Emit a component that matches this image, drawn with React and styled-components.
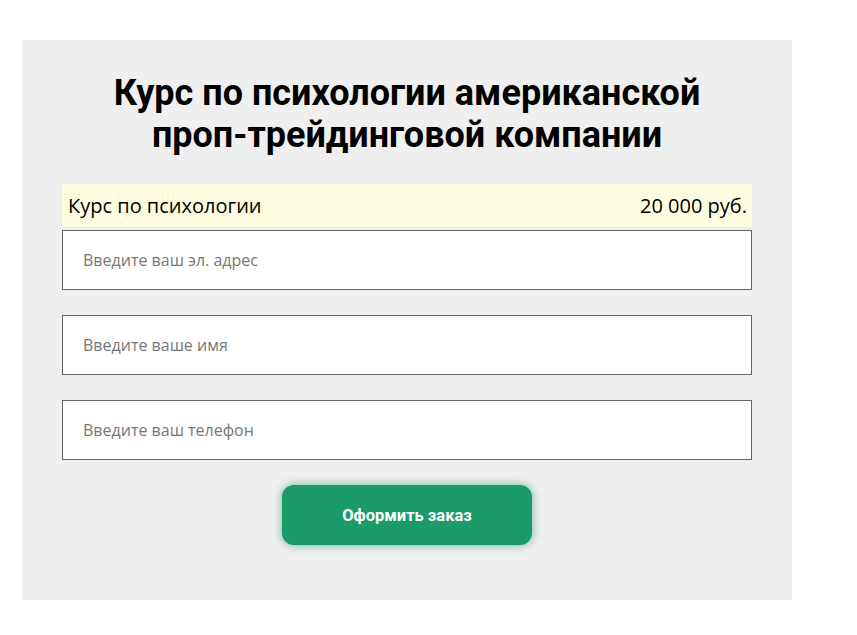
import React from 'react';
import styled, { createGlobalStyle } from 'styled-components';

const GlobalStyle = createGlobalStyle`
	body {
		margin: 0;
		background: #ffffff;
		font-family: 'Open Sans', 'Liberation Sans', sans-serif;
	}
`;

const Page = styled.div`
	padding: 40px 0 0 22px;
`;

const Panel = styled.div`
	width: 770px;
	height: 560px;
	box-sizing: border-box;
	background: #efefef;
	padding: 32px 40px 0;
	display: flex;
	flex-direction: column;
	align-items: stretch;
`;

const Title = styled.h1`
	margin: 0 0 28px;
	font-family: Roboto, 'Liberation Sans', sans-serif;
	font-weight: 700;
	font-size: 36px;
	line-height: 42px;
	color: #000;
	text-align: center;
`;

const PriceRow = styled.div`
	display: flex;
	justify-content: space-between;
	align-items: center;
	height: 43px;
	padding: 0 5px 0 6px;
	background: #fffde0;
	font-size: 20px;
	color: #000;
	margin-bottom: 3px;
`;

const Field = styled.input`
	display: block;
	box-sizing: border-box;
	width: 100%;
	height: 60px;
	margin: 0 0 25px;
	padding: 0 20px;
	border: 1px solid #666;
	border-radius: 0;
	background: #fff;
	font-family: 'Open Sans', 'Liberation Sans', sans-serif;
	font-size: 16px;
	outline: none;

	&::placeholder {
		color: #777;
	}
`;

const Submit = styled.button`
	align-self: center;
	width: 250px;
	height: 60px;
	border: none;
	border-radius: 12px;
	background: #1a9b69;
	color: #fff;
	font-family: Roboto, 'Liberation Sans', sans-serif;
	font-weight: 700;
	font-size: 16.5px;
	box-shadow: 0 0 10px rgba(26, 155, 105, 0.65);
	cursor: pointer;
`;

export default function App() {
	return (
		<Page>
			<GlobalStyle />
			<Panel>
				<Title>
					Курс по психологии американской
					<br />
					проп-трейдинговой компании
				</Title>
				<PriceRow>
					<span>Курс по психологии</span>
					<span>20 000 руб.</span>
				</PriceRow>
				<Field type="email" placeholder="Введите ваш эл. адрес" />
				<Field type="text" placeholder="Введите ваше имя" />
				<Field type="tel" placeholder="Введите ваш телефон" />
				<Submit type="button">Оформить заказ</Submit>
			</Panel>
		</Page>
	);
}
